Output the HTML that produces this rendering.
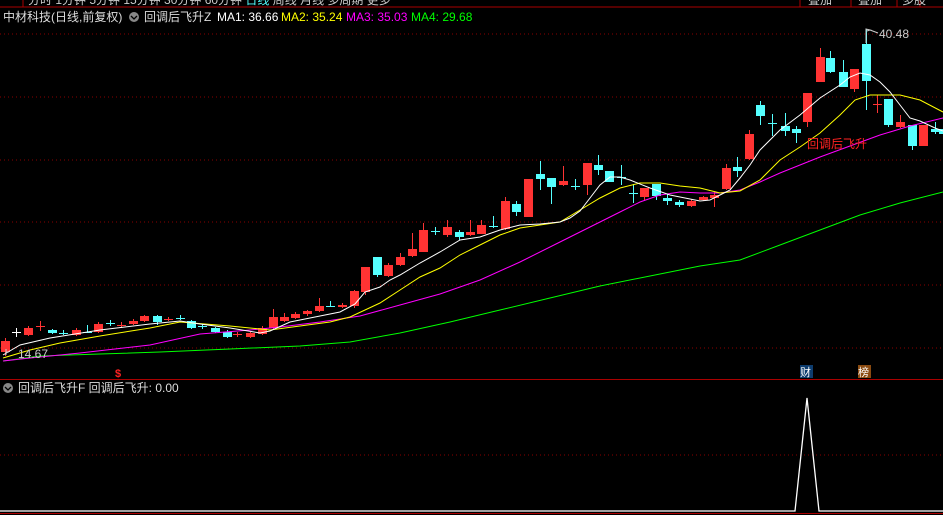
<!DOCTYPE html>
<html><head><meta charset="utf-8"><style>
html,body{margin:0;padding:0;background:#000;width:943px;height:515px;overflow:hidden}
svg{display:block}
text{font-family:"Liberation Sans","Noto Sans CJK SC",sans-serif}
</style></head><body>
<svg id="s" width="943" height="515" xmlns="http://www.w3.org/2000/svg">
<rect width="943" height="515" fill="#000"/>
<!-- top bar -->
<line x1="0" y1="7" x2="943" y2="7" stroke="#a00" stroke-width="1"/>
<line x1="23" y1="0" x2="23" y2="7" stroke="#a00"/>
<line x1="800" y1="0" x2="800" y2="7" stroke="#a00"/>
<line x1="851" y1="0" x2="851" y2="7" stroke="#a00"/>
<line x1="897" y1="0" x2="897" y2="7" stroke="#a00"/>
<line x1="920" y1="0" x2="920" y2="7" stroke="#a00"/>
<text x="28" y="4" font-size="12" fill="#ccc">分时  1分钟  5分钟  15分钟  30分钟  60分钟 <tspan fill="#5ff">日线</tspan> 周线  月线  多周期  更多</text>
<text x="808" y="4" font-size="12" fill="#ccc">叠加</text>
<text x="858" y="4" font-size="12" fill="#ccc">叠加</text>
<text x="902" y="4" font-size="12" fill="#ccc">多股</text>
<!-- grid -->
<g stroke="#8a0000" stroke-dasharray="1,3">
<line x1="0" y1="34" x2="943" y2="34"/><line x1="0" y1="97" x2="943" y2="97"/>
<line x1="0" y1="160" x2="943" y2="160"/><line x1="0" y1="222" x2="943" y2="222"/>
<line x1="0" y1="285" x2="943" y2="285"/><line x1="0" y1="348" x2="943" y2="348"/>
<line x1="0" y1="455" x2="943" y2="455"/>
</g>
<line x1="0" y1="379.5" x2="943" y2="379.5" stroke="#a00"/>
<line x1="0" y1="513.5" x2="943" y2="513.5" stroke="#a00"/>
<!-- title -->
<text x="3" y="21" font-size="12" fill="#ddd">中材科技(日线,前复权)</text>
<circle cx="134" cy="17" r="5" fill="#888"/><path d="M131 16l3 3 3-3" stroke="#000" fill="none" stroke-width="1.3"/>
<text x="144" y="21" font-size="12" fill="#ddd">回调后飞升Z</text>
<text x="217" y="21" font-size="12" fill="#fff">MA1: 36.66</text>
<text x="281" y="21" font-size="12" fill="#ff0">MA2: 35.24</text>
<text x="346" y="21" font-size="12" fill="#f0f">MA3: 35.03</text>
<text x="411" y="21" font-size="12" fill="#0f0">MA4: 29.68</text>
<g id="c"></g>
<polyline id="m4" fill="none" stroke="#0f0" stroke-width="1"/>
<polyline id="m3" fill="none" stroke="#f0f" stroke-width="1"/>
<polyline id="m2" fill="none" stroke="#ff0" stroke-width="1"/>
<polyline id="m1" fill="none" stroke="#fff" stroke-width="1"/>
<path d="M866 43V29l4 1-3 1M870 30l8 3" stroke="#ccc" fill="none"/>
<text x="879" y="38" font-size="12" fill="#ccc">40.48</text>
<path d="M6 352l3 0M6 349v6" stroke="#ccc" fill="none"/>
<text x="18" y="358" font-size="12" fill="#ccc">14.67</text>
<text x="807" y="148" font-size="12" fill="#f22">回调后飞升</text>
<text x="115" y="377" font-size="11" fill="#f22" font-weight="bold">$</text>
<rect x="800" y="365" width="13" height="13" fill="#0d3c6e"/><text x="800" y="376" font-size="11" fill="#fff">财</text>
<rect x="858" y="365" width="13" height="13" fill="#8a4a10"/><text x="858" y="376" font-size="11" fill="#fff">榜</text>
<circle cx="8" cy="388" r="5" fill="#888"/><path d="M5 387l3 3 3-3" stroke="#000" fill="none" stroke-width="1.3"/>
<text x="18" y="392" font-size="12" fill="#ddd">回调后飞升F  回调后飞升: 0.00</text>
<polyline points="0,511 795,511 807,398 819,511 943,511" fill="none" stroke="#fff" stroke-width="1.3"/>
</svg>
<script>
var R='#ff3333',C='#55ffff';
// x, o(top), c(bottom) body, wickTop, wickBot, color, type(b=body,x=cross)
var d=[[5,341,352,338,356,R],[16,332,332,328,337,'#fff'],[28,328,335,326,336,R],[40,326,326,321,331,R],[52,330,333,329,334,C],[63,333,333,330,335,C],[76,330,335,328,336,R],[87,332,332,325,333,C],[98,324,332,322,333,R],[110,323,323,320,326,C],[121,325,325,322,328,R],[133,321,324,319,325,R],[144,316,321,315,322,R],[157,316,322,315,325,C],[168,319,319,317,321,R],[180,318,318,315,320,C],[191,321,328,320,329,C],[202,326,326,324,329,C],[215,328,332,327,333,C],[227,332,337,330,338,C],[237,334,334,332,337,R],[250,333,337,332,338,R],[262,328,334,326,335,R],[273,317,328,309,330,R],[284,317,321,313,322,R],[295,314,318,312,319,R],[307,311,314,310,316,R],[319,306,311,298,312,R],[330,306,306,301,307,C],[342,305,307,303,308,R],[354,291,306,290,308,R],[365,267,292,267,295,R],[377,257,275,257,277,C],[388,265,276,263,277,R],[400,257,265,253,266,R],[412,249,256,233,257,R],[423,230,252,223,252,R],[435,231,231,227,235,C],[447,227,235,220,237,R],[459,232,237,230,240,C],[470,232,235,220,236,R],[481,225,234,220,234,R],[493,226,226,216,228,C],[505,201,229,197,230,R],[516,204,212,201,216,C],[528,179,217,179,217,R],[540,174,179,161,190,C],[551,178,187,178,204,C],[563,181,185,166,186,R],[575,186,186,179,190,C],[587,163,185,163,195,R],[598,165,170,155,175,C],[609,171,182,171,182,C],[621,177,177,165,185,C],[633,193,193,184,203,C],[644,188,197,188,200,R],[656,184,196,184,200,C],[667,198,201,194,205,C],[679,202,205,200,207,C],[691,201,206,199,207,R],[703,197,200,196,201,R],[714,195,198,192,207,R],[726,168,189,164,190,R],[737,167,171,157,177,C],[749,134,159,130,160,R],[760,105,116,101,125,C],[772,123,123,114,136,C],[785,126,131,113,136,C],[796,129,133,126,143,C],[807,93,122,93,127,R],[820,57,82,48,82,R],[830,58,72,51,73,C],[843,72,87,60,87,C],[854,69,89,69,92,R],[866,44,81,29,110,C],[877,104,104,95,113,R],[888,99,125,99,127,C],[900,122,127,115,128,R],[912,125,146,125,150,C],[923,125,146,125,146,R],[935,129,132,122,134,C],[943,129,134,127,136,C]];
var s='';
d.forEach(function(a){var x=a[0],col=a[5];
s+='<line x1="'+(x+.5)+'" y1="'+a[3]+'" x2="'+(x+.5)+'" y2="'+a[4]+'" stroke="'+col+'"/>';
var h=a[2]-a[1];
if(h<1.5)s+='<line x1="'+(x-4)+'" y1="'+(a[1]+.5)+'" x2="'+(x+5)+'" y2="'+(a[1]+.5)+'" stroke="'+col+'"/>';
else s+='<rect x="'+(x-4)+'" y="'+a[1]+'" width="9" height="'+h+'" fill="'+col+'"/>';});
document.getElementById('c').innerHTML=s;
function P(id,p){document.getElementById(id).setAttribute('points',p);}
P('m1','3,355 20,345 50,338 100,330 150,324 180,321 200,324 230,328 260,333 270,331 290,322 310,318 340,312 355,304 365,292 380,287 390,280 400,275 420,263 440,252 460,240 480,237 500,230 520,225 540,224 560,222 570,218 580,211 590,198 600,185 610,177 620,177 630,180 650,188 670,195 690,199 700,201 710,200 720,195 730,190 740,178 750,165 760,150 780,130 800,115 820,98 840,85 850,77 860,73 870,75 880,82 890,92 900,105 910,118 920,121 935,128 943,131');
P('m2','3,358 30,350 60,343 100,336 150,328 180,322 230,326 270,330 300,326 330,322 350,317 380,303 400,290 420,277 440,268 460,255 480,245 500,235 520,228 560,222 580,210 600,198 620,188 640,183 660,183 680,186 700,188 720,193 740,191 760,180 780,160 800,147 820,133 840,115 855,100 870,95 900,95 920,100 943,112');
P('m3','3,361 30,358 80,353 150,345 200,334 250,330 280,327 320,322 360,316 400,305 440,294 480,280 520,262 560,242 600,222 620,212 640,202 660,195 680,192 700,193 720,193 740,190 760,182 780,173 800,165 820,157 850,146 880,135 910,126 943,118');
P('m4','3,361 40,356 100,354 160,352 230,349 300,346 350,342 400,333 450,322 500,310 550,298 600,286 650,276 700,266 740,260 780,245 820,230 860,215 900,203 943,192');
</script>
</body></html>
